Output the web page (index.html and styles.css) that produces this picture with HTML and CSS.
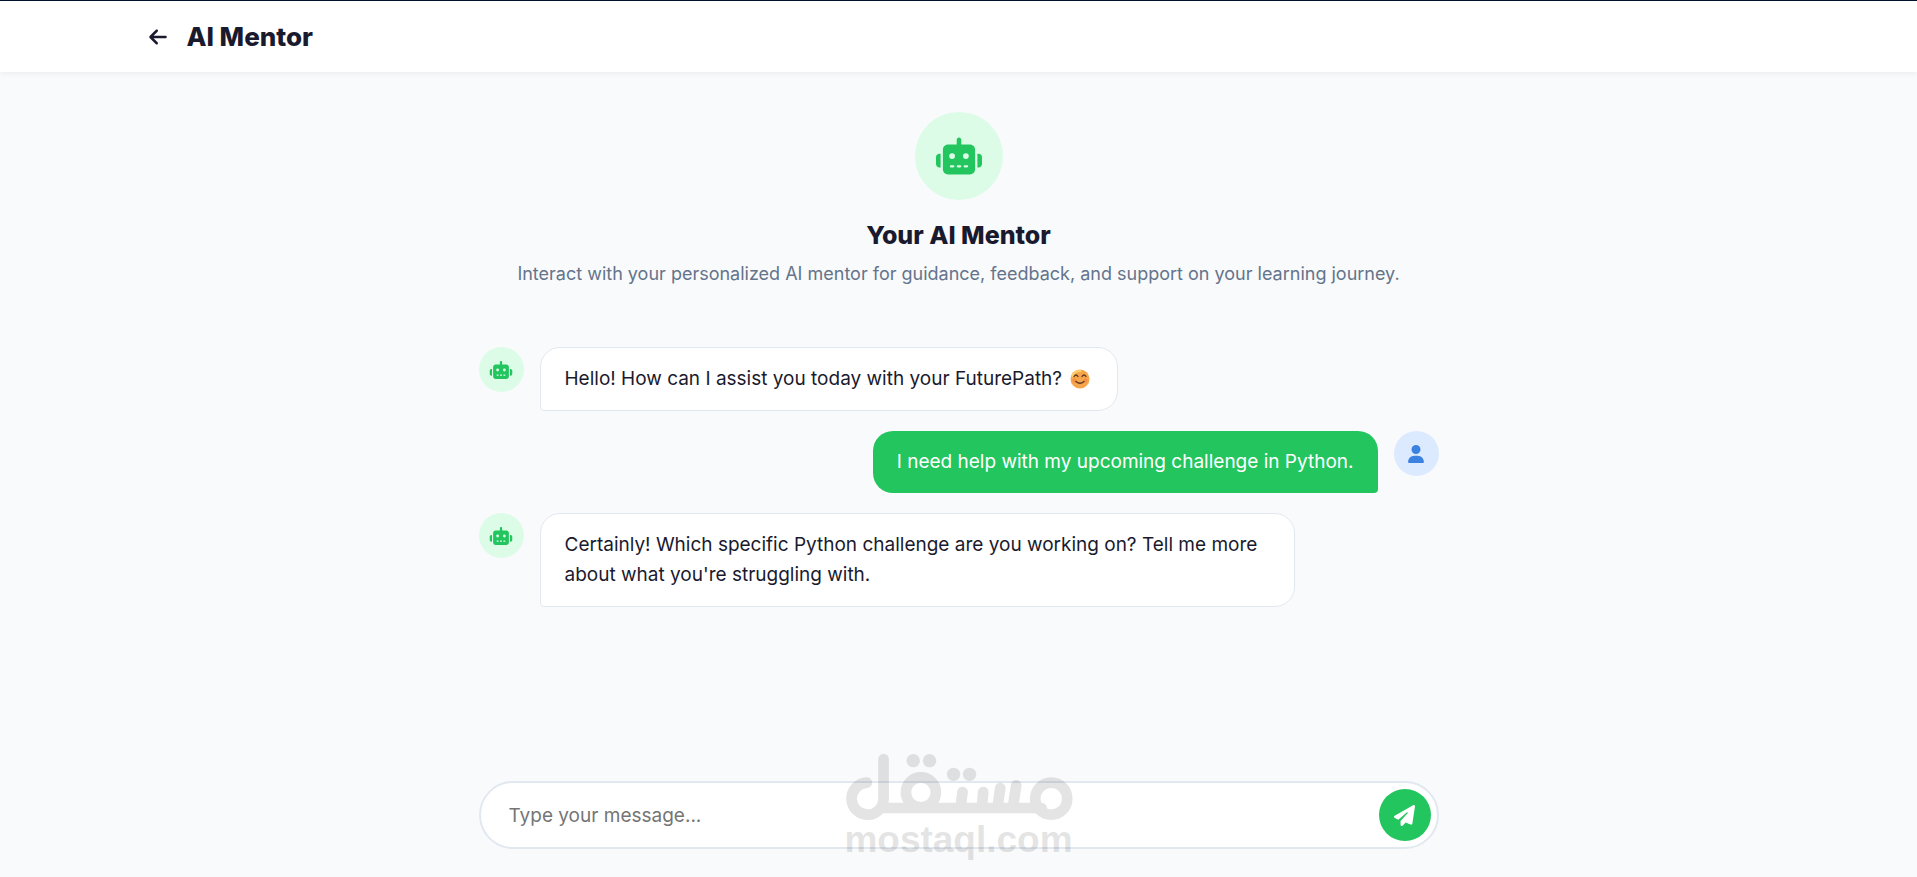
FILE: index.html
```
<!DOCTYPE html>
<html lang="en">
<head>
  <meta charset="UTF-8">
  <meta name="viewport" content="width=device-width, initial-scale=1.0">
  <title>AI Mentor</title>
  <link rel="stylesheet" href="styles.css">
</head>
<body>
  <svg class="sprite" aria-hidden="true">
    <symbol id="robot" viewBox="0 0 640 512">
      <path d="M320 0c17.7 0 32 14.3 32 32V96H472c39.8 0 72 32.2 72 72V440c0 39.8-32.2 72-72 72H168c-39.8 0-72-32.2-72-72V168c0-39.8 32.2-72 72-72H288V32c0-17.7 14.3-32 32-32zM208 384c-8.8 0-16 7.2-16 16s7.2 16 16 16h32c8.8 0 16-7.2 16-16s-7.2-16-16-16H208zm96 0c-8.8 0-16 7.2-16 16s7.2 16 16 16h32c8.8 0 16-7.2 16-16s-7.2-16-16-16H304zm96 0c-8.8 0-16 7.2-16 16s7.2 16 16 16h32c8.8 0 16-7.2 16-16s-7.2-16-16-16H400zM264 256a40 40 0 1 0 -80 0 40 40 0 1 0 80 0zm152 40a40 40 0 1 0 0-80 40 40 0 1 0 0 80zM48 224H64V416H48c-26.5 0-48-21.5-48-48V272c0-26.5 21.5-48 48-48zm544 0c26.5 0 48 21.5 48 48v96c0 26.5-21.5 48-48 48H576V224h16z"/>
    </symbol>
  </svg>

  <header class="page-header">
    <div class="header-inner">
      <a href="#" class="back-btn" aria-label="Back">
        <svg viewBox="0 0 448 512"><path d="M9.4 233.4c-12.5 12.5-12.5 32.8 0 45.3l160 160c12.5 12.5 32.8 12.5 45.3 0s12.5-32.8 0-45.3L109.2 288 416 288c17.7 0 32-14.3 32-32s-14.3-32-32-32l-306.7 0L214.6 118.6c12.5-12.5 12.5-32.8 0-45.3s-32.8-12.5-45.3 0l-160 160z"/></svg>
      </a>
      <h1>AI Mentor</h1>
    </div>
  </header>

  <main class="mentor">
    <section class="intro">
      <div class="intro-icon"><svg><use href="#robot"/></svg></div>
      <h2>Your AI Mentor</h2>
      <p>Interact with your personalized AI mentor for guidance, feedback, and support on your learning journey.</p>
    </section>

    <section class="chat">
      <div class="message">
        <div class="avatar"><svg><use href="#robot"/></svg></div>
        <div class="bubble">Hello! How can I assist you today with your FuturePath?
          <svg class="emoji" viewBox="0 0 20 20" role="img" aria-label="Smiling face">
            <circle cx="10" cy="10" r="9.5" fill="#f5a54a"/>
            <path d="M2.5 7a8 8 0 0 1 8-5" fill="none" stroke="#ffd36b" stroke-width="2" stroke-linecap="round"/>
            <circle cx="4.5" cy="11.5" r="2" fill="#f58f45"/>
            <circle cx="15.5" cy="11.5" r="2" fill="#f58f45"/>
            <path d="M4 7.5q2-3 4 0M12 7.5q2-3 4 0M6 12.5q4 3.5 8 0" fill="none" stroke="#5c3527" stroke-width="1.3" stroke-linecap="round"/>
          </svg>
        </div>
      </div>

      <div class="message user">
        <div class="avatar">
          <svg viewBox="0 0 448 512"><path d="M224 256A128 128 0 1 0 224 0a128 128 0 1 0 0 256zm-45.7 48C79.8 304 0 383.8 0 482.3C0 498.7 13.3 512 29.7 512H418.3c16.4 0 29.7-13.3 29.7-29.7C448 383.8 368.2 304 269.7 304H178.3z"/></svg>
        </div>
        <div class="bubble">I need help with my upcoming challenge in Python.</div>
      </div>

      <div class="message">
        <div class="avatar"><svg><use href="#robot"/></svg></div>
        <div class="bubble">Certainly! Which specific Python challenge are you working on? Tell me more about what you're struggling with.</div>
      </div>
    </section>

    <form class="chat-form">
      <input type="text" placeholder="Type your message..." aria-label="Message">
      <button type="button" aria-label="Send">
        <svg viewBox="0 0 512 512"><path d="M498.1 5.6c10.1 7 15.4 19.1 13.5 31.2l-64 416c-1.5 9.7-7.4 18.2-16 23s-18.9 5.4-28 1.6L284 427.7l-68.5 74.1c-8.9 9.7-22.9 12.9-35.2 8.1S160 493.2 160 480V396.4c0-4 1.5-7.8 4.2-10.7L331.8 202.8c5.8-6.3 5.6-16-.4-22s-15.7-6.4-22-.7L106 360.8 17.7 316.6C7.1 311.3 .3 300.7 0 288.9s5.9-22.8 16.1-28.7l448-256c10.7-6.1 23.9-5.5 34 1.4z"/></svg>
      </button>
    </form>
  </main>

  <div class="watermark">
    <svg viewBox="0 0 684 204" aria-hidden="true">
      <g fill="none" stroke="#000" stroke-width="32" stroke-linecap="round">
        <path d="M66 89A48 48 0 1 0 116 137V18M112 165H590"/>
        <circle cx="228" cy="118" r="45"/>
        <circle cx="619" cy="137" r="48"/>
        <path d="M353 117L347 163M415 117L411 163M466 105L458 163M514 97L504 163"/>
      </g>
      <circle cx="205" cy="23" r="20"/>
      <circle cx="254" cy="23" r="20"/>
      <circle cx="326" cy="64" r="20"/>
      <circle cx="374" cy="64" r="20"/>
    </svg>
    <span>mostaql.com</span>
  </div>
</body>
</html>
```
FILE: styles.css
```
* {
  margin: 0;
  padding: 0;
  box-sizing: border-box;
}
body {
  font-family: 'Inter', sans-serif;
  background: #f9fafc;
  color: #1a1a2e;
  min-height: 100vh;
  display: flex;
  flex-direction: column;
  position: relative;
}
svg {
  fill: currentColor;
}
.sprite {
  display: none;
}
.page-header {
  background: #fff;
  border-top: 1px solid #021029;
  box-shadow: 0 2px 5px rgba(0,0,0,0.05);
}
.header-inner {
  max-width: 1620px;
  height: 71px;
  margin: 0 auto;
  display: flex;
  align-items: center;
  gap: 20px;
}
.back-btn {
  color: inherit;
  display: flex;
}
.back-btn svg {
  width: 18px;
  height: 20px;
}
h1, h2 {
  font-weight: 800;
  line-height: 32px;
}
h1 {
  font-size: 26px;
}
h2 {
  font-size: 25px;
}
.mentor {
  width: 100%;
  max-width: 960px;
  margin: 0 auto;
  padding: 40px 0 28px;
  flex: 1;
  display: flex;
  flex-direction: column;
}
.intro {
  text-align: center;
  margin-bottom: 58px;
}
.intro-icon {
  width: 88px;
  height: 88px;
  margin: 0 auto 19px;
  border-radius: 50%;
  background: #dcfce7;
  color: #22c55e;
  display: flex;
  align-items: center;
  justify-content: center;
}
.intro-icon svg {
  width: 46px;
  height: 38px;
}
.intro p {
  margin-top: 8px;
  color: #64748b;
  font-size: 18px;
  line-height: 30px;
}
.chat {
  flex: 1;
  display: flex;
  flex-direction: column;
  gap: 20px;
}
.message {
  display: flex;
  align-items: flex-start;
  gap: 16px;
  max-width: 85%;
}
.message.user {
  flex-direction: row-reverse;
  align-self: flex-end;
}
.avatar {
  width: 45px;
  height: 45px;
  flex-shrink: 0;
  border-radius: 50%;
  background: #dcfce7;
  color: #22c55e;
  display: flex;
  align-items: center;
  justify-content: center;
}
.avatar svg {
  width: 24px;
  height: 18px;
}
.user .avatar {
  background: #dbeafe;
  color: #3b82e0;
}
.bubble {
  background: #fff;
  border: 1px solid #e2e8f0;
  border-radius: 20px 20px 20px 4px;
  padding: 16px 24px;
  font-size: 19px;
  line-height: 30px;
}
.user .bubble {
  background: #22c55e;
  border: none;
  border-radius: 20px 20px 4px 20px;
  color: #fff;
}
.emoji {
  width: 20px;
  height: 20px;
  margin: 0 3px;
  vertical-align: -4px;
}
.chat-form {
  display: flex;
  align-items: center;
  background: #fff;
  border: 2px solid #e2e8f0;
  border-radius: 34px;
  padding: 6px 6px 6px 28px;
}
.chat-form input {
  flex: 1;
  border: none;
  outline: none;
  background: none;
  font-family: inherit;
  font-size: 19px;
}
.chat-form input::placeholder {
  color: #757575;
}
.chat-form button {
  width: 52px;
  height: 52px;
  border: none;
  border-radius: 50%;
  background: #22c55e;
  color: #fff;
  cursor: pointer;
  display: flex;
  align-items: center;
  justify-content: center;
}
.chat-form button svg {
  width: 21px;
  height: 21px;
}
.watermark {
  position: absolute;
  left: 50%;
  bottom: 18px;
  transform: translateX(-50%);
  color: #000;
  opacity: 0.1;
  pointer-events: none;
  display: flex;
  flex-direction: column;
  align-items: center;
}
.watermark svg {
  width: 228px;
  height: 68px;
}
.watermark span {
  font-family: 'Liberation Sans', sans-serif;
  font-size: 37px;
  font-weight: 700;
  line-height: 38px;
}
```
